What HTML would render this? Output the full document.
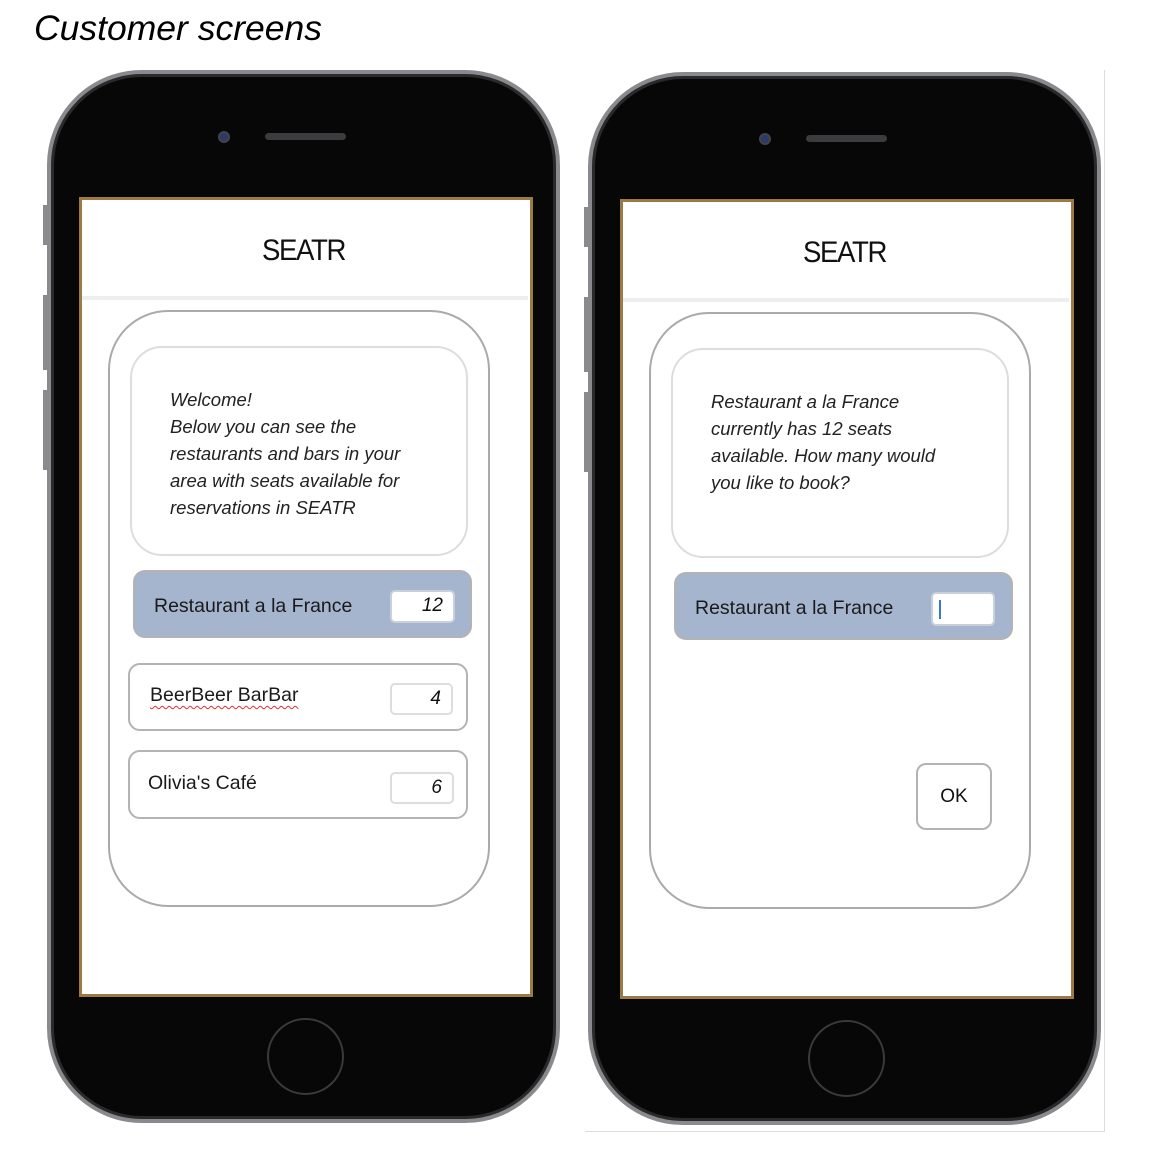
<!DOCTYPE html>
<html><head><meta charset="utf-8"><style>
*{margin:0;padding:0;box-sizing:border-box}
body{width:1150px;height:1158px;background:#fff;position:relative;overflow:hidden;font-family:"Liberation Sans",sans-serif}
.a{position:absolute}
.title{left:34px;top:8px;font-size:35.5px;font-style:italic;color:#000}
.phone{position:absolute;width:513px;height:1053px}
.body{left:0;top:0;width:513px;height:1053px;background:#070707;border-radius:95px;border:4px solid #8a8a8e;box-shadow:inset 0 0 0 3px #2a2a2a}
.btn{background:#8a8a8e;width:5px;left:-4px}
.screen{left:32px;top:127px;width:454px;height:800px;background:#fff;border:3px solid #9b7a44}
.hline{left:35px;top:226px;width:446px;height:4px;background:#eceef0}
.seatr{left:0;width:513px;text-align:center;top:164px;font-size:30px;color:#111;letter-spacing:-1.5px;transform:scaleX(0.92)}
.card{left:61px;top:240px;width:382px;height:597px;border:2px solid #aaa;border-radius:60px}
.msg{left:83px;top:276px;width:338px;height:210px;border:2px solid #ddd;border-radius:32px}
.txt{font-style:italic;font-size:18.5px;line-height:27px;color:#222;white-space:nowrap}
.row{border:2px solid #b3b3b3;border-radius:12px;background:#fff}
.row.sel{background:#a4b5cd}
.rt{font-size:19.5px;color:#1a1a1a}
.inp{background:#fff;border:2px solid #ddd;border-radius:5px;text-align:right;padding-right:10px;font-style:italic;font-size:19px;line-height:28px;color:#111}
.cam{left:171px;top:61px;width:12px;height:12px;border-radius:50%;background:#2a3a6a;border:2px solid #444}
.spk{left:218px;top:63px;width:81px;height:7px;border-radius:4px;background:#3c3c3e}
.home{left:220px;top:948px;width:77px;height:77px;border-radius:50%;border:2px solid #3a3a3e}
</style></head><body>
<div class="a title">Customer screens</div>

<div class="phone" style="left:47px;top:70px">
 <div class="a btn" style="top:135px;height:40px"></div>
 <div class="a btn" style="top:225px;height:75px"></div>
 <div class="a btn" style="top:320px;height:80px"></div>
 <div class="a body"></div>
 <div class="a cam"></div><div class="a spk"></div>
 <div class="a screen"></div>
 <div class="a hline"></div>
 <div class="a seatr">SEATR</div>
 <div class="a card"></div>
 <div class="a msg"></div>
 <div class="a txt" style="left:123px;top:316px">Welcome!<br>Below you can see the<br>restaurants and bars in your<br>area with seats available for<br>reservations in SEATR</div>
 <div class="a row sel" style="left:86px;top:500px;width:339px;height:68px"></div>
 <div class="a rt" style="left:107px;top:525px">Restaurant a la France</div>
 <div class="a inp" style="left:343px;top:520px;width:65px;height:33px;border-color:#c8d0dc">12</div>
 <div class="a row" style="left:81px;top:593px;width:340px;height:68px"></div>
 <div class="a rt" style="left:103px;top:614px;text-decoration:underline wavy #e03030;text-decoration-thickness:1px;text-underline-offset:4px">BeerBeer BarBar</div>
 <div class="a inp" style="left:343px;top:613px;width:63px;height:32px">4</div>
 <div class="a row" style="left:81px;top:680px;width:340px;height:69px"></div>
 <div class="a rt" style="left:101px;top:702px">Olivia's Café</div>
 <div class="a inp" style="left:343px;top:702px;width:64px;height:32px">6</div>
 <div class="a home"></div>
</div>

<div class="phone" style="left:588px;top:72px">
 <div class="a btn" style="top:135px;height:40px"></div>
 <div class="a btn" style="top:225px;height:75px"></div>
 <div class="a btn" style="top:320px;height:80px"></div>
 <div class="a body"></div>
 <div class="a cam"></div><div class="a spk"></div>
 <div class="a screen"></div>
 <div class="a hline"></div>
 <div class="a seatr">SEATR</div>
 <div class="a card"></div>
 <div class="a msg"></div>
 <div class="a txt" style="left:123px;top:316px">Restaurant a la France<br>currently has 12 seats<br>available. How many would<br>you like to book?</div>
 <div class="a row sel" style="left:86px;top:500px;width:339px;height:68px"></div>
 <div class="a rt" style="left:107px;top:525px">Restaurant a la France</div>
 <div class="a inp" style="left:343px;top:520px;width:64px;height:34px;border-color:#c8d0dc"></div>
 <div class="a" style="left:351px;top:528px;width:2px;height:19px;background:#3a78c8"></div>
 <div class="a row" style="left:328px;top:691px;width:76px;height:67px;border-radius:10px;text-align:center;line-height:63px;font-size:19px;color:#111">OK</div>
 <div class="a home"></div>
</div>
<div class="a" style="left:1104px;top:70px;width:1px;height:1062px;background:#ddd"></div>
<div class="a" style="left:585px;top:1131px;width:520px;height:1px;background:#ddd"></div>
</body></html>
